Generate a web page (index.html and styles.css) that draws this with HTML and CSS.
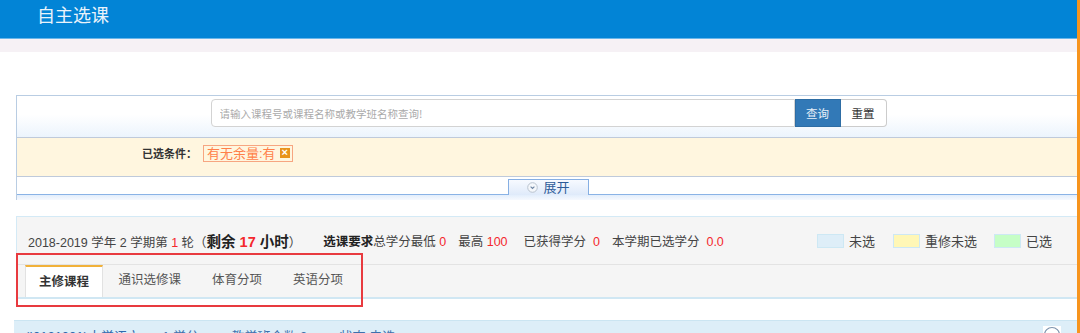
FILE: index.html
```html
<!DOCTYPE html>
<html lang="zh-CN">
<head>
  <meta charset="UTF-8">
  <title>自主选课</title>
  <link rel="stylesheet" href="styles.css">
</head>
<body>
  <div class="header">
    <span class="title">自主选课</span>
  </div>
  <div class="subbar"></div>

  <div class="page">
    <!-- search panel -->
    <div class="search-panel">
      <div class="search-row">
        <input type="text" class="search-input" placeholder="请输入课程号或课程名称或教学班名称查询!">
        <button class="btn btn-primary">查询</button>
        <button class="btn btn-reset">重置</button>
      </div>
      <div class="cond-row">
        <span class="cond-label">已选条件：</span>
        <span class="cond-tag">有无余量:有<i class="tag-x">×</i></span>
      </div>
      <div class="toggle-row">
        <div class="toggle-tab">
          <svg class="toggle-icon" width="11" height="11" viewBox="0 0 11 11">
            <circle cx="5.5" cy="5.5" r="4.8" fill="#f4f7fb" stroke="#b9c3cf" stroke-width="1"/>
            <path d="M3.6 4.6 L5.5 6.5 L7.4 4.6" fill="none" stroke="#6f86a3" stroke-width="1.1"/>
          </svg>
          展开
        </div>
      </div>
      <div class="panel-foot"></div>
    </div>

    <!-- term info and tabs -->
    <div class="term-panel">
      <div class="term-info">
        <span class="term-text">2018-2019 学年 2 学期第 <em class="red">1</em> 轮（<b class="remain">剩余 <em class="red">17</em> 小时</b>）</span>
        <span class="req req-first"><b>选课要求</b>总学分最低 <em class="red">0</em></span>
        <span class="req">最高 <em class="red">100</em></span>
        <span class="req req-got">已获得学分 &nbsp;<em class="red">0</em></span>
        <span class="req">本学期已选学分 &nbsp;<em class="red">0.0</em></span>
        <div class="legend">
          <span class="swatch sw-blue"></span><span class="legend-text">未选</span>
          <span class="swatch sw-yellow"></span><span class="legend-text">重修未选</span>
          <span class="swatch sw-green"></span><span class="legend-text">已选</span>
        </div>
      </div>
      <ul class="tabs">
        <li class="tab active">主修课程</li>
        <li class="tab">通识选修课</li>
        <li class="tab">体育分项</li>
        <li class="tab">英语分项</li>
      </ul>
    </div>

    <!-- first course row -->
    <div class="course-row">
      <a class="course-name">(I0121001)大学语文</a>
      <span class="course-sep">-</span>
      <span class="course-item">1 学分</span>
      <span class="course-sep">-</span>
      <span class="course-item">教学班个数 3</span>
      <span class="course-sep">-</span>
      <span class="course-item">状态 未选</span>
      <svg class="course-toggle" width="18" height="18" viewBox="0 0 18 18">
        <rect width="18" height="18" fill="#fff"/>
        <circle cx="9" cy="9" r="7.5" fill="#fff" stroke="#7d93ad" stroke-width="1.2"/>
        <path d="M5.8 7.5 L9 10.6 L12.2 7.5" fill="none" stroke="#7d93ad" stroke-width="1.3"/>
      </svg>
    </div>
  </div>

  <!-- red annotation box around tabs -->
  <div class="mark-box"></div>
  <!-- orange edge on the right -->
  <div class="edge-line"></div>
</body>
</html>
```

FILE: styles.css
```css
body {
  margin: 0;
  font-family: "Liberation Sans", "Noto Sans CJK SC", sans-serif;
  font-size: 13px;
  color: #333;
  background: #fff;
  overflow: hidden;
  position: relative;
  height: 333px;
}
em {
  font-style: normal;
}
.red {
  color: #f4282d;
}

.header {
  height: 38px;
  background-color: #0284d6;
  border-bottom: 1px solid #69b6ea;
}
.title {
  display: block;
  padding-left: 37px;
  line-height: 33px;
  font-size: 18px;
  color: #e9f3fb;
}
.subbar {
  height: 13px;
  background-color: #f6f1f5;
}

.page {
  padding-top: 43px;
}

/* search panel */
.search-panel {
  margin-left: 16px;
  border-top: 1px solid #b9cde3;
  border-left: 1px solid #b9cde3;
}
.search-row {
  display: flex;
  justify-content: center;
  padding: 3px 0 10px;
  height: 28px;
  background: linear-gradient(#fff 45%, #ecf4fd);
  border-bottom: 1px solid #bfcadb;
}
.search-input {
  box-sizing: border-box;
  width: 584px;
  height: 28px;
  border: 1px solid #d3d3d3;
  border-radius: 4px 0 0 4px;
  padding: 0 8px;
  font-family: "Noto Sans CJK SC", sans-serif;
  font-size: 10.5px;
  outline: none;
}
.search-input::placeholder {
  color: #aaa;
}
.btn {
  box-sizing: border-box;
  width: 46px;
  height: 28px;
  border: 1px solid #ccc;
  font-family: "Noto Sans CJK SC", sans-serif;
  font-size: 11.5px;
  padding: 0;
}
.btn-primary {
  background-color: #3279b7;
  border-color: #2e6da4;
  color: #e8f0f8;
}
.btn-reset {
  background-color: #fff;
  color: #333;
  border-left: none;
  border-radius: 0 4px 4px 0;
}

.cond-row {
  display: flex;
  align-items: center;
  box-sizing: border-box;
  height: 39px;
  padding-bottom: 8px;
  background-color: #fff6df;
  border-bottom: 1px solid #bfcadb;
}
.cond-label {
  width: 180px;
  text-align: right;
  font-size: 11px;
  font-weight: bold;
  color: #333;
}
.cond-tag {
  display: flex;
  align-items: center;
  margin-left: 6px;
  height: 15px;
  padding: 0 2px 0 3px;
  border: 1px solid #f7a681;
  color: #ff8049;
  font-size: 13px;
  line-height: 15px;
}
.tag-x {
  display: inline-block;
  width: 10px;
  height: 10px;
  margin-left: 4px;
  background-color: #e8931b;
  color: #fff;
  font-style: normal;
  font-weight: bold;
  font-size: 11px;
  line-height: 9px;
  text-align: center;
}

.toggle-row {
  display: flex;
  justify-content: center;
  align-items: flex-end;
  height: 17px;
  border-bottom: 1px solid #8ab3e6;
}
.toggle-tab {
  position: relative;
  margin-bottom: -1px;
  box-sizing: border-box;
  width: 81px;
  height: 16px;
  display: flex;
  align-items: center;
  justify-content: center;
  gap: 5px;
  border: 1px solid #86afe3;
  border-bottom: none;
  background: linear-gradient(#f7faff, #dfeafa);
  color: #2d5c99;
  font-size: 13px;
  line-height: 14px;
}
.panel-foot {
  height: 5px;
  background: linear-gradient(#e3eefc, #f6f9fe);
}

/* term panel */
.term-panel {
  margin: 16px 0 0 16px;
  background-color: #f5f5f5;
  border-top: 1px solid #d4eaf6;
  border-left: 1px solid #d4eaf6;
  border-bottom: 2px solid #d0e7f3;
}
.term-info {
  display: flex;
  align-items: center;
  height: 47px;
  padding-left: 11px;
  border-bottom: 1px solid #e3e3e3;
  font-size: 12.5px;
  color: #444;
}
.remain {
  font-size: 14.5px;
  color: #222;
}
.req {
  margin-left: 12px;
}
.req-first {
  margin-left: 22px;
}
.req-got {
  margin-left: 16px;
}
.req b {
  color: #222;
}
.legend {
  display: flex;
  align-items: center;
  margin-left: auto;
  padding-right: 28px;
  font-size: 13px;
}
.swatch {
  box-sizing: border-box;
  width: 27px;
  height: 14px;
  margin-right: 5px;
  border: 1px solid #cde8f4;
}
.sw-blue {
  background-color: #deeef8;
}
.sw-yellow {
  background-color: #fff7b6;
  margin-left: 18px;
}
.sw-green {
  background-color: #c6fec6;
  margin-left: 17px;
}
.legend-text {
  color: #444;
}

.tabs {
  display: flex;
  list-style: none;
  margin: 0;
  padding: 0 0 0 8px;
  height: 32px;
  font-size: 12.5px;
}
.tab {
  box-sizing: border-box;
  height: 32px;
  padding: 0 15.5px;
  line-height: 30px;
  color: #555;
}
.tab.active {
  padding: 0 13px;
  background-color: #fff;
  border-top: 2px solid #f1b13a;
  border-left: 1px solid #e2e2e2;
  border-right: 1px solid #e2e2e2;
  font-weight: bold;
  color: #333;
}

/* course row */
.course-row {
  display: flex;
  align-items: flex-start;
  margin: 21px 0 0 14px;
  height: 30px;
  padding: 5px 0 0 11px;
  background-color: #ddeef8;
  border-top: 1px solid #cbe5f2;
  color: #3d71ad;
}
.course-name {
  color: #2f69ad;
}
.course-sep {
  margin: 0 9px;
  color: #7a9cc0;
}
.course-item {
  margin-right: 10px;
  color: #3d71ad;
}
.course-toggle {
  margin-left: auto;
  margin-right: 19px;
  margin-top: 0;
}

/* overlays */
.mark-box {
  position: absolute;
  left: 16px;
  top: 253px;
  width: 343px;
  height: 50px;
  border: 2px solid #e83a3f;
}
.edge-line {
  position: absolute;
  top: 0;
  right: 0;
  width: 3px;
  height: 333px;
  background-color: #f7941d;
}
```
